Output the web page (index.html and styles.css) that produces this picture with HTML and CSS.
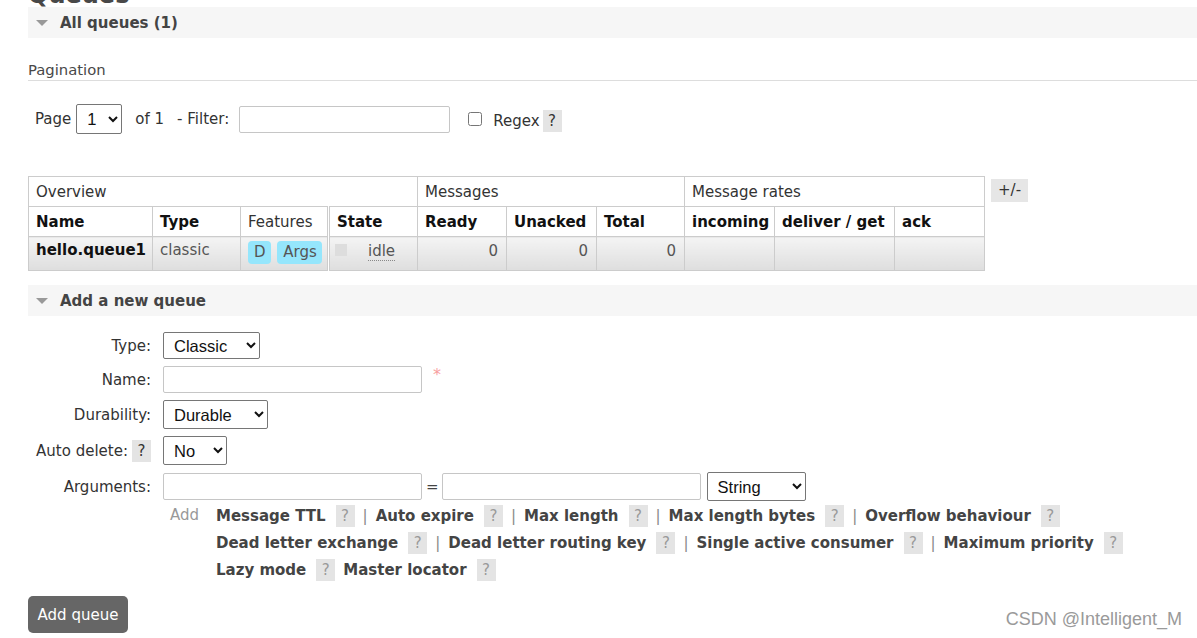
FILE: index.html
```html
<!DOCTYPE html>
<html lang="en">
  <head>
    <meta charset="UTF-8" />
    <meta name="viewport" content="width=device-width, initial-scale=1.0" />
    <title>Queues</title>
    <link rel="stylesheet" href="styles.css">
  </head>
  <body>
    <div class="page">
      <h1 class="title">Queues</h1>

      <!-- All queues -->
      <div class="section">
        <h2 class="section-head"><span class="arrow"></span>All queues (1)</h2>
        <h3 class="pag-title">Pagination</h3>
        <div class="pager">
          <span>Page</span>
          <select class="sel sel-page">
            <option>1</option>
          </select>
          <span class="of">of 1</span>
          <span class="filter-label">- Filter:</span>
          <input type="text" class="txt txt-filter" />
          <input type="checkbox" class="chk" />
          <span class="regex">Regex</span>
          <span class="help">?</span>
        </div>

        <div class="table-row">
          <table class="list">
            <colgroup>
              <col style="width: 124px" />
              <col style="width: 88px" />
              <col style="width: 88px" />
              <col style="width: 89px" />
              <col style="width: 89px" />
              <col style="width: 90px" />
              <col style="width: 88px" />
              <col style="width: 90px" />
              <col style="width: 120px" />
              <col style="width: 90px" />
            </colgroup>
            <thead>
              <tr class="group-row">
                <th colspan="4">Overview</th>
                <th colspan="3" class="group">Messages</th>
                <th colspan="3" class="group">Message rates</th>
              </tr>
              <tr class="col-row">
                <th>Name</th>
                <th>Type</th>
                <th class="plain">Features</th>
                <th class="state-col">State</th>
                <th class="group">Ready</th>
                <th>Unacked</th>
                <th>Total</th>
                <th class="group">incoming</th>
                <th>deliver / get</th>
                <th>ack</th>
              </tr>
            </thead>
            <tbody>
              <tr class="data-row">
                <td class="qname">hello.queue1</td>
                <td>classic</td>
                <td><span class="badge">D</span> <span class="badge">Args</span></td>
                <td class="state-col"><span class="state-box"></span><span class="idle">idle</span></td>
                <td class="num group">0</td>
                <td class="num">0</td>
                <td class="num">0</td>
                <td class="group"></td>
                <td></td>
                <td></td>
              </tr>
            </tbody>
          </table>
          <span class="toggle">+/-</span>
        </div>
      </div>

      <!-- Add a new queue -->
      <div class="section">
        <h2 class="section-head"><span class="arrow"></span>Add a new queue</h2>
        <form class="queue-form">
          <label class="lbl">Type:</label>
          <div class="field">
            <select class="sel sel-type"><option>Classic</option></select>
          </div>

          <label class="lbl">Name:</label>
          <div class="field">
            <input type="text" class="txt txt-wide" />
            <span class="req">*</span>
          </div>

          <label class="lbl">Durability:</label>
          <div class="field">
            <select class="sel sel-dur"><option>Durable</option></select>
          </div>

          <label class="lbl">Auto delete: <span class="help">?</span></label>
          <div class="field">
            <select class="sel sel-auto"><option>No</option></select>
          </div>

          <label class="lbl">Arguments:</label>
          <div class="field">
            <input type="text" class="txt txt-wide" />
            <span class="eq">=</span>
            <input type="text" class="txt txt-wide" />
            <select class="sel sel-str"><option>String</option></select>
          </div>

          <span></span>
          <div class="args-help">
            <span class="add">Add</span>
            <div class="arg-links">
              <div class="arg-line">
                <b>Message TTL</b> <span class="help light">?</span> <span class="sep">|</span>
                <b>Auto expire</b> <span class="help light">?</span> <span class="sep">|</span>
                <b>Max length</b> <span class="help light">?</span> <span class="sep">|</span>
                <b>Max length bytes</b> <span class="help light">?</span> <span class="sep">|</span>
                <b>Overflow behaviour</b> <span class="help light">?</span>
              </div>
              <div class="arg-line">
                <b>Dead letter exchange</b> <span class="help light">?</span> <span class="sep">|</span>
                <b>Dead letter routing key</b> <span class="help light">?</span> <span class="sep">|</span>
                <b>Single active consumer</b> <span class="help light">?</span> <span class="sep">|</span>
                <b>Maximum priority</b> <span class="help light">?</span>
              </div>
              <div class="arg-line">
                <b>Lazy mode</b> <span class="help light">?</span>
                <b>Master locator</b> <span class="help light">?</span>
              </div>
            </div>
          </div>
        </form>
        <button class="add-btn" type="button">Add queue</button>
      </div>
    </div>

    <div class="watermark">CSDN @Intelligent_M</div>
  </body>
</html>
```

FILE: styles.css
```css
body {
  margin: 0;
  font-family: "DejaVu Sans", Verdana, sans-serif;
  font-size: 15px;
  color: #333;
  background: white;
  overflow: hidden;
}
.page {
  padding-left: 28px;
}
.title {
  margin: -20px 0 -3px;
  font-size: 24px;
  line-height: 30px;
  color: #484848;
}
.section-head {
  margin: 0;
  height: 31px;
  display: flex;
  align-items: center;
  background: #f6f6f6;
  font-size: 15px;
  font-weight: bold;
  color: #444;
}
.arrow {
  width: 0;
  height: 0;
  margin: 1px 12px 0 8px;
  border-left: 6px solid transparent;
  border-right: 6px solid transparent;
  border-top: 6px solid #999;
}
.pag-title {
  margin: 22px 0 0;
  font-size: 14.8px;
  font-weight: normal;
  line-height: 20px;
  color: #484848;
  border-bottom: 1px solid #ddd;
}
.pager {
  display: flex;
  align-items: center;
  height: 30px;
  margin-top: 23px;
  padding-left: 7px;
}
.sel {
  font-family: "Liberation Sans", Arial, sans-serif;
  font-size: 16.5px;
  color: #111;
  background: white;
  border: 1px solid #767676;
  border-radius: 2px;
  padding: 0 4px 0 6px;
}
.sel-page {
  width: 46px;
  height: 30px;
  margin-left: 5px;
}
.of {
  margin-left: 13px;
}
.filter-label {
  margin-left: 13px;
}
.txt {
  height: 27px;
  box-sizing: border-box;
  border: 1px solid #c6c6c6;
  border-radius: 2px;
  padding: 0 4px;
  font-family: "Liberation Sans", Arial, sans-serif;
  font-size: 15px;
}
.txt-filter {
  width: 211px;
  margin-left: 10px;
}
.chk {
  width: 14px;
  height: 14px;
  margin: 0 0 0 18px;
}
.regex {
  margin-left: 11px;
  margin-top: 4px;
}
.help {
  display: inline-block;
  width: 19px;
  height: 22px;
  line-height: 22px;
  text-align: center;
  background: #e4e4e4;
  color: #333;
  font-weight: normal;
}
.pager .help {
  margin-left: 3px;
  margin-top: 4px;
}
.help.light {
  color: #999;
}

/* queue table */
.table-row {
  display: flex;
  align-items: flex-start;
  margin-top: 42px;
}
.list {
  border-collapse: collapse;
  table-layout: fixed;
  width: 956px;
}
.list th,
.list td {
  border: 1px solid #ccc;
  padding: 0 8px 0 7px;
  text-align: left;
  white-space: nowrap;
  overflow: hidden;
}
.group-row th {
  height: 29px;
  font-weight: normal;
  color: #333;
}
.col-row th {
  height: 29px;
  font-weight: bold;
  color: #111;
}
.col-row th.plain {
  font-weight: normal;
  color: #333;
}
.list .state-col {
  border-left: 3px double #ccc;
}
.data-row td {
  height: 28px;
  vertical-align: top;
  padding-top: 4px;
  color: #555;
  background: linear-gradient(#f4f4f4, #dedede);
}
.data-row td.qname {
  font-weight: bold;
  color: #111;
}
.data-row td.num {
  text-align: right;
  padding-top: 5px;
}
.badge {
  display: inline-block;
  padding: 0 5px 0 6px;
  height: 23px;
  line-height: 23px;
  border-radius: 4px;
  background: #95e6fc;
  color: #555;
}
.badge + .badge {
  margin-left: 2px;
}
.state-box {
  display: inline-block;
  width: 12px;
  height: 12px;
  margin: 3px 0 0 -2px;
  background: #ddd;
  vertical-align: top;
}
.idle {
  display: inline-block;
  margin-left: 21px;
  padding-top: 1px;
  border-bottom: 1px dotted #888;
  line-height: 18px;
}
.toggle {
  margin: 3px 0 0 6px;
  padding: 0 7px;
  height: 23px;
  line-height: 23px;
  background: #e6e6e6;
  color: #333;
}

/* add queue form */
.section + .section {
  margin-top: 14px;
}
.queue-form {
  display: grid;
  grid-template-columns: 123px 1fr;
  column-gap: 12px;
  row-gap: 7px;
  margin-top: 16px;
}
.lbl {
  justify-self: end;
  align-self: center;
  display: flex;
  align-items: center;
  gap: 4px;
  color: #333;
}
.field {
  display: flex;
  align-items: center;
}
.sel-type {
  width: 97px;
  height: 27px;
}
.sel-dur {
  width: 105px;
  height: 29px;
}
.sel-auto {
  width: 64px;
  height: 29px;
}
.sel-str {
  width: 99px;
  height: 29px;
  margin-left: 6px;
}
.txt-wide {
  width: 259px;
}
.req {
  margin: -10px 0 0 11px;
  color: #f8a0a0;
  font-size: 16px;
}
.eq {
  margin: 0 3px 0 4px;
  color: #444;
}
.args-help {
  display: flex;
  align-items: flex-start;
  margin-top: -6px;
}
.add {
  margin: 4px 0 0 7px;
  width: 46px;
  color: #999;
}
.arg-line {
  height: 27px;
  display: flex;
  align-items: center;
  gap: 8px;
  color: #444;
}
.arg-line b {
  margin-right: 2px;
}
.arg-line .sep {
  color: #888;
}
.add-btn {
  margin-top: 13px;
  width: 100px;
  height: 37px;
  border: none;
  border-radius: 5px;
  background: #666;
  color: white;
  font-family: "DejaVu Sans", Verdana, sans-serif;
  font-size: 15px;
  cursor: pointer;
}
.watermark {
  position: absolute;
  right: 15px;
  bottom: 8px;
  font-family: "Liberation Sans", Arial, sans-serif;
  font-size: 18px;
  color: #9a9a9a;
}
```
